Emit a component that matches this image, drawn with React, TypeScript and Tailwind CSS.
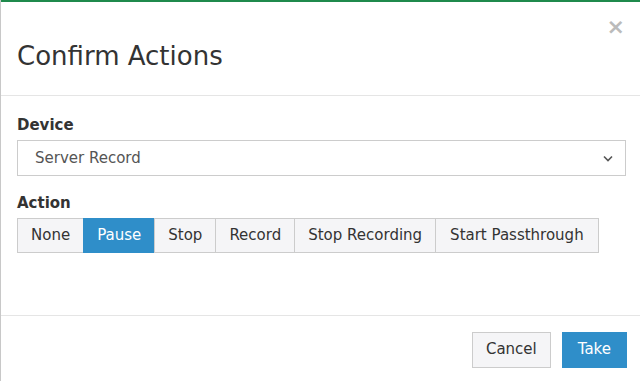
import React from "react";

const font = { fontFamily: '"DejaVu Sans", Verdana, sans-serif' };

export default function App() {
  const actions = ["None", "Pause", "Stop", "Record", "Stop Recording", "Start Passthrough"];
  return (
    <div className="w-[640px] h-[381px] bg-white overflow-hidden relative" style={font}>
      <div className="h-[2px] bg-[#1f8a4c]" />
      <div className="absolute left-0 top-0 w-px h-[381px] bg-[#c8c8c8]" />
      <div className="flex flex-col h-[379px] pl-px">
        <div className="relative flex items-center h-[94px] border-b border-[#e5e5e5] px-4">
          <h1 className="text-[26px] text-[#333] leading-none mt-[14px]">Confirm Actions</h1>
          <span className="absolute right-[15px] top-[14px] text-[#bbb] text-[22px] font-bold leading-none">×</span>
        </div>
        <div className="px-4 pt-[19px] flex-1 border-b border-[#e5e5e5]">
          <div className="text-[15px] font-bold text-[#333] leading-[20px]">Device</div>
          <div className="mt-[5px] h-[36px] w-[609px] border border-[#ccc] flex items-center justify-between pl-[17px] pr-[12px] text-[15px] text-[#555]">
            <span>Server Record</span>
            <svg width="10" height="7" viewBox="0 0 10 7"><path d="M1 1.5 L5 5.5 L9 1.5" stroke="#555" strokeWidth="1.6" fill="none" /></svg>
          </div>
          <div className="mt-[17px] text-[15px] font-bold text-[#333] leading-[20px]">Action</div>
          <div className="mt-[5px] flex">
            {actions.map((a, i) => (
              <div
                key={a}
                className={
                  (a === "Pause"
                    ? "bg-[#2f8ec9] text-white border-[#2f8ec9] "
                    : "bg-[#f5f5f7] text-[#333] border-[#ccc] ") +
                  (i > 0 ? "-ml-px " : "") +
                  (a === "Start Passthrough" ? "px-[14px] " : "px-[13px] ") +
                  "h-[35px] flex items-center border text-[15px]"
                }
              >
                {a}
              </div>
            ))}
          </div>
        </div>
        <div className="h-[65px] flex items-center justify-end gap-[11px] pr-[13px] pt-[2px]">
          <div className="h-[36px] px-[13px] flex items-center border border-[#ccc] bg-[#f5f5f7] text-[#333] text-[15px]">Cancel</div>
          <div className="h-[36px] px-[15px] flex items-center border border-[#2f8ec9] bg-[#2f8ec9] text-white text-[15px]">Take</div>
        </div>
      </div>
    </div>
  );
}
